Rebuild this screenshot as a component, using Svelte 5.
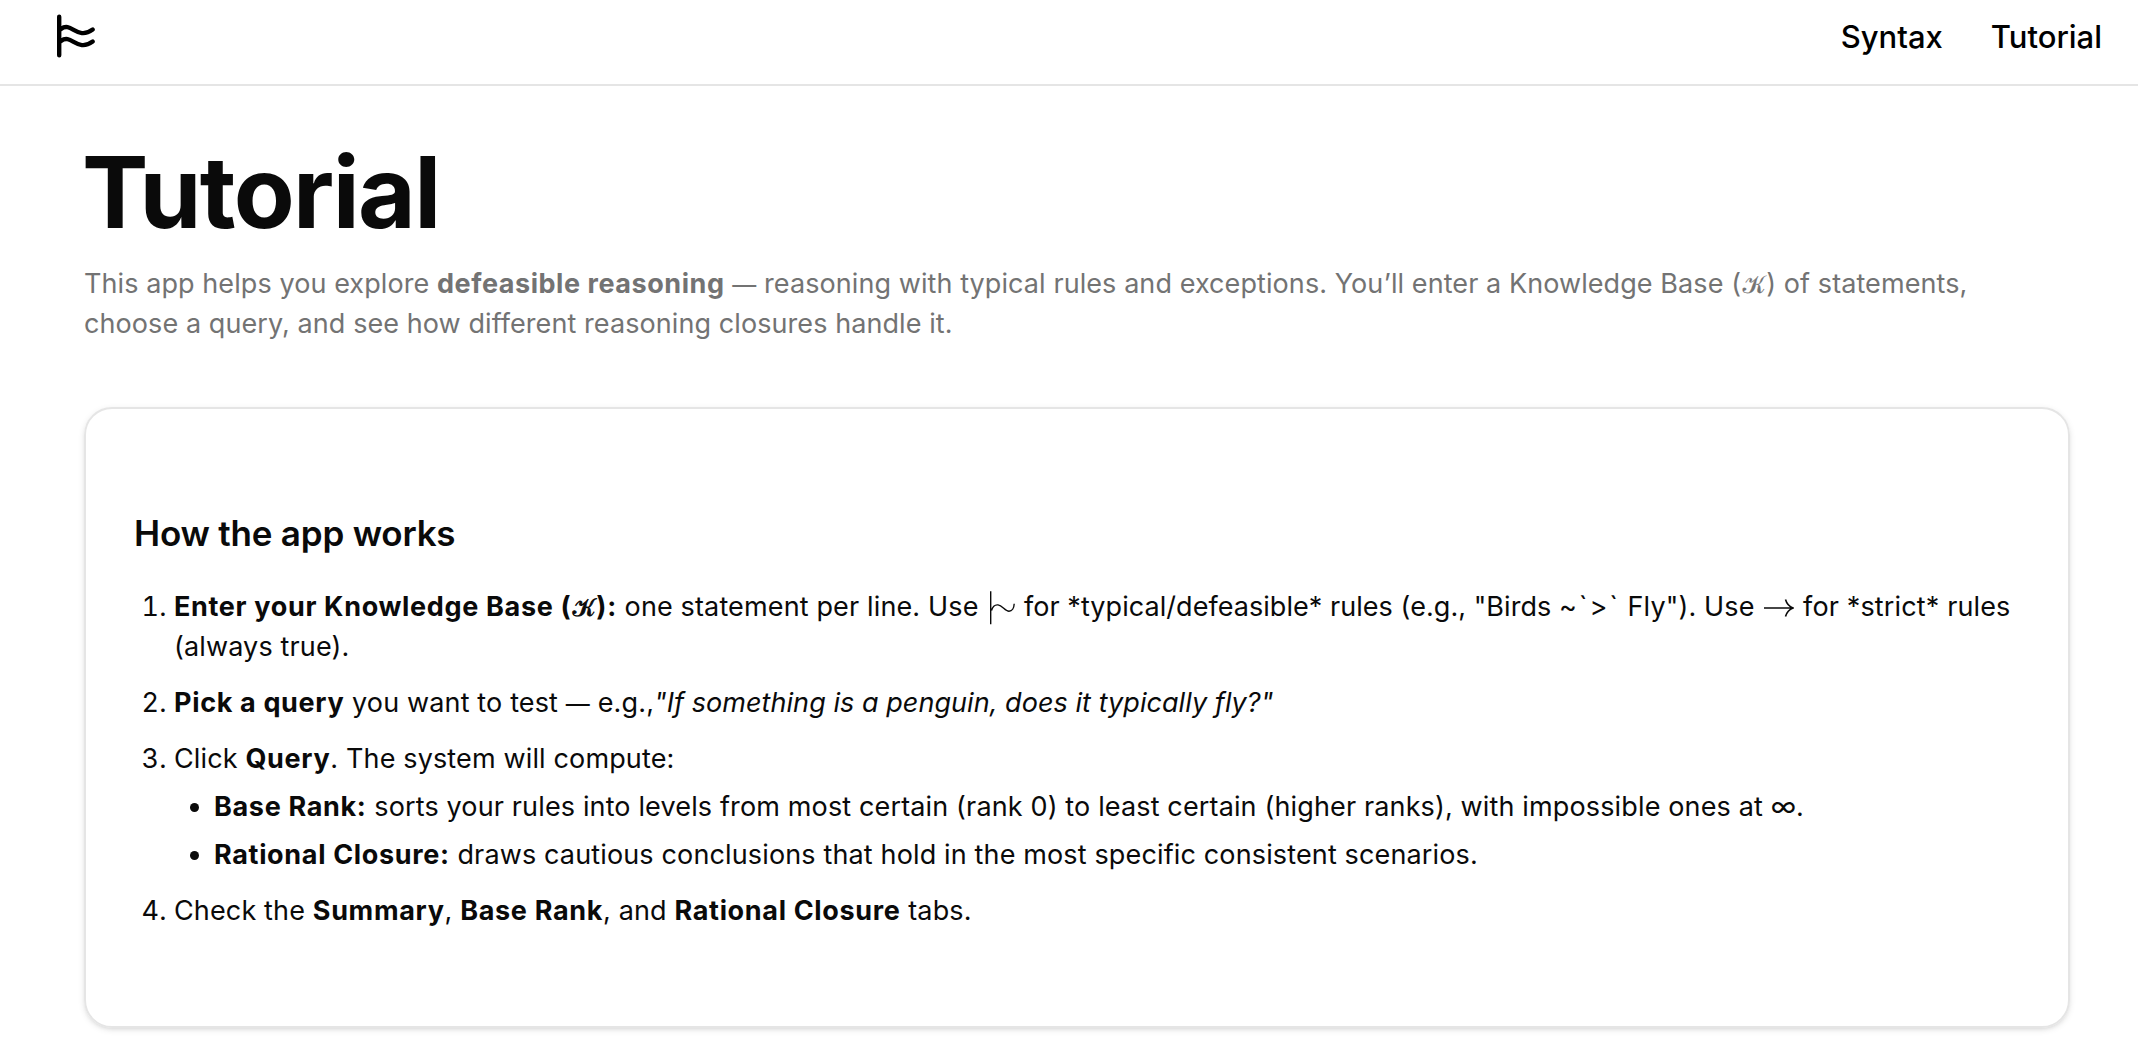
{#snippet snake()}
  <svg class="snake" viewBox="0 0 26 36" aria-hidden="true">
    <path d="M1.700 1.300V34.300M2.500 20.500C3.500 17 6 14.600 9 14.900C13.500 15.300 16 21.200 20 21.200C23 21.200 25 18 25.200 13.800" />
  </svg>
{/snippet}

{#snippet arrow()}
  <svg class="arrow" viewBox="0 0 31 20" aria-hidden="true">
    <path d="M1 10H29.500M22.500 1.500C23.500 5 26 8.500 30 10C26 11.500 23.500 15 22.500 18.500" />
  </svg>
{/snippet}

<div class="page">
  <header>
    <svg class="logo" viewBox="0 0 48 48" aria-label="Home">
      <path d="M7.200 4.800V43.200M9 17C19.500 9 25 29 40.700 17.500M9 29C19.500 21 25 41 40.700 29.500" />
    </svg>
    <nav><a href="#syntax">Syntax</a><a href="#tutorial">Tutorial</a></nav>
  </header>

  <main>
    <h1>Tutorial</h1>
    <p class="intro">
      This app helps you explore <strong>defeasible reasoning</strong> <span class="dash">—</span> reasoning with
      typical rules and exceptions. You’ll enter a Knowledge Base (<span class="script">𝒦</span>) of statements,<br />
      choose a query, and see how different reasoning closures handle it.
    </p>

    <section class="card">
      <h2>How the app works</h2>
      <ol>
        <li>
          <strong>Enter your Knowledge Base (<span class="script">𝒦</span>):</strong> one statement per line. Use
          {@render snake()} <span class="tight">for *typical/defeasible* rules (e.g., "Birds</span>
          <span class="operator">~`&gt;`</span> Fly"). Use
          {@render arrow()} for *strict* rules<br />(always true).
        </li>
        <li>
          <strong>Pick a query</strong> you want to test <span class="dash">—</span> e.g.,<em>"If something is a penguin, does it typically fly?"</em>
        </li>
        <li>
          Click <strong>Query</strong>. The system will compute:
          <ul>
            <li>
              <strong>Base Rank:</strong> sorts your rules into levels from most certain (rank 0) to least certain
              (higher ranks), with impossible ones at ∞.
            </li>
            <li>
              <strong>Rational Closure:</strong> draws cautious conclusions that hold in the most specific consistent
              scenarios.
            </li>
          </ul>
        </li>
        <li>
          Check the <strong>Summary</strong>, <strong>Base Rank</strong>, and <strong>Rational Closure</strong> tabs.
        </li>
      </ol>
    </section>
  </main>
</div>

<style>
  :global(body) {
    margin: 0;
    background: #fff;
  }
  .page {
    height: 1056px;
    overflow: hidden;
    font-family: Inter, 'Noto Sans', sans-serif;
    font-size: 27px;
    line-height: 40px;
    letter-spacing: 0.08px;
    color: #0a0a0a;
  }
  header {
    display: flex;
    align-items: flex-start;
    justify-content: space-between;
    box-sizing: border-box;
    height: 86px;
    padding: 12px 36px 0 52px;
    border-bottom: 2px solid #e5e5e5;
  }
  svg {
    fill: none;
    stroke: currentColor;
  }
  .logo {
    width: 48px;
    height: 48px;
    color: #000;
    stroke-width: 4.4;
    stroke-linecap: round;
    stroke-linejoin: round;
  }
  nav {
    display: flex;
    gap: 48px;
    padding-top: 5px;
  }
  nav a {
    color: #000;
    font-size: 31px;
    font-weight: 500;
    letter-spacing: 0;
    text-decoration: none;
  }
  main {
    padding: 58px 68px 0 84px;
  }
  h1 {
    margin: 0 0 0 -2px;
    font-size: 99.5px;
    font-weight: 700;
    line-height: 96px;
    letter-spacing: -1.6px;
  }
  .intro {
    margin: 24px 0 0;
    color: #737373;
    white-space: nowrap;
  }
  .dash {
    font-size: 24px;
    line-height: 1;
  }
  strong {
    font-weight: 700;
    letter-spacing: 0.55px;
  }
  .card {
    box-sizing: border-box;
    height: 621px;
    margin-top: 63px;
    padding: 104px 48px 0;
    border: 2px solid #e5e5e5;
    border-radius: 28px;
    box-shadow: 0 2px 6px rgb(0 0 0 / 0.1), 0 2px 4px -2px rgb(0 0 0 / 0.1);
  }
  h2 {
    margin: 0;
    font-size: 35px;
    font-weight: 600;
    letter-spacing: -0.2px;
  }
  ol,
  ul {
    margin: 0;
    padding-left: 40px;
  }
  ol {
    display: grid;
    gap: 16px;
    margin-top: 34px;
    letter-spacing: 0.14px;
    white-space: nowrap;
  }
  ol strong {
    letter-spacing: 0.66px;
  }
  ul {
    display: grid;
    gap: 8px;
    margin-top: 8px;
    list-style: disc;
  }
  em {
    letter-spacing: 0.05px;
  }
  .tight {
    letter-spacing: 0.05px;
  }
  .operator {
    letter-spacing: 1.9px;
  }
  .script {
    display: inline-block;
    padding: 0 1px;
    font-family: 'Noto Sans', serif;
    font-size: 25px;
    line-height: 1;
    transform: skewX(8deg);
    -webkit-text-stroke: 0.2px currentColor;
  }
  strong .script {
    font-weight: 400;
    letter-spacing: 0;
    -webkit-text-stroke-width: 0.8px;
  }
  .snake {
    width: 26px;
    height: 36px;
    margin: 0 1px 0 3px;
    vertical-align: -9.5px;
    stroke-width: 1.4;
  }
  .arrow {
    width: 31px;
    height: 20px;
    margin: 0 1px;
    vertical-align: -1.5px;
    stroke-width: 1.6;
  }
</style>
